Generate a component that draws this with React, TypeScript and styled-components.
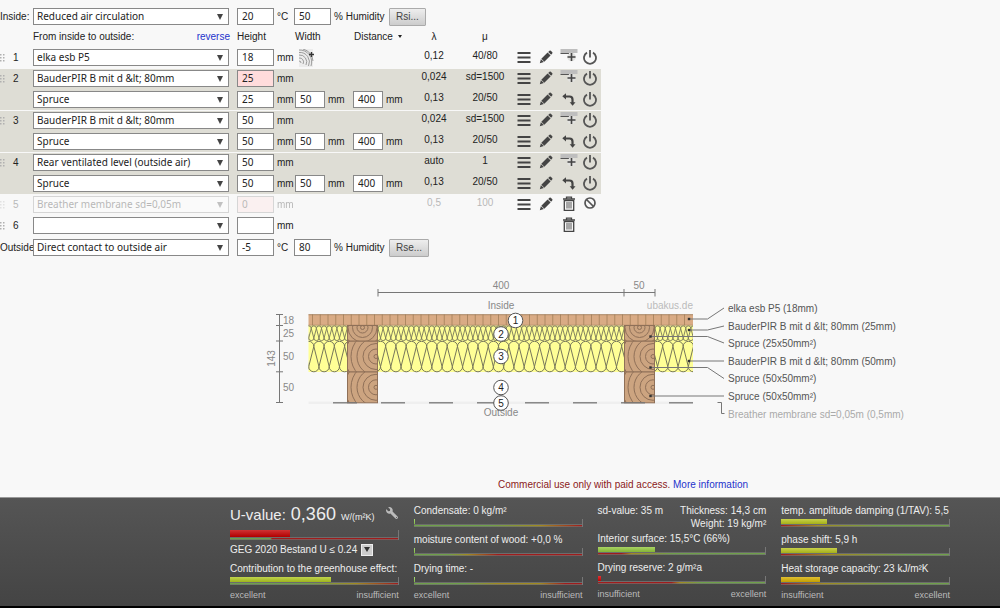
import React from "react";
import styled, { createGlobalStyle } from "styled-components";
import { FaWrench } from "react-icons/fa";

const Global = createGlobalStyle`
  *, *::before, *::after { box-sizing: border-box; }
  body {
    margin: 0;
    background: #f8f8f8;
    color: #222;
    font: 10px/16px "Liberation Sans", Arial, sans-serif;
  }
`;

const FIELD_FONT = `"Noto Sans", Verdana, sans-serif`;

const Page = styled.div`
  display: flex;
  flex-direction: column;
  min-height: 100vh;
  padding-top: 8px;
`;

/* ---------- form fields ---------- */

const SelectWrap = styled.div`
  position: relative;
  width: 196px;
  height: 17px;
  flex: none;
  &::after {
    content: "";
    position: absolute;
    right: 6px;
    top: 6px;
    border: 3px solid transparent;
    border-top: 6px solid #444;
    border-bottom: 0;
    pointer-events: none;
  }
`;

const Select = styled.select`
  appearance: none;
  display: block;
  width: 100%;
  height: 17px;
  margin: 0;
  padding: 0 16px 0 3px;
  border: 1px solid #888;
  border-radius: 0;
  background: #fff;
  color: #222;
  font: 10px/15px ${FIELD_FONT};
`;

const NumberBox = styled.input<{ $narrow?: boolean; $warn?: boolean }>`
  display: block;
  flex: none;
  width: ${(p) => (p.$narrow ? 30 : 37)}px;
  height: 17px;
  margin: 0;
  padding: 0 4px 1px;
  border: 1px solid #888;
  border-radius: 0;
  background: ${(p) => (p.$warn ? "#ffdcdc" : "#fff")};
  color: #222;
  font: 10px/14px ${FIELD_FONT};
`;

const Field = styled.div`
  display: flex;
  gap: 3px;
  line-height: 18px;
`;

function Dropdown({ label, value, id }: { label: string; value: string; id?: string }) {
  return (
    <SelectWrap>
      <Select id={id} aria-label={label} defaultValue={value}>
        <option>{value}</option>
      </Select>
    </SelectWrap>
  );
}

/* ---------- inside / outside climate ---------- */

const ClimateRow = styled.div`
  display: flex;
  height: 17px;
  line-height: 18px;
`;

const ClimateLabel = styled.label`
  flex: none;
  width: 33px;
  white-space: nowrap;
`;

const Unit = styled.span<{ $w: number }>`
  flex: none;
  width: ${(p) => p.$w}px;
  padding-left: 3px;
  white-space: nowrap;
`;

const Gap = styled.span`
  flex: none;
  width: 8px;
`;

const GreyButton = styled.button`
  height: 18px;
  padding: 0 6px;
  border: 1px solid #aaa;
  border-radius: 1px;
  background: linear-gradient(#eee, #ccc);
  color: #444;
  font: 10px/16px "Liberation Sans", Arial, sans-serif;
`;

type ClimateProps = { id: string; name: string; surface: string; temp: string; humidity: string; button: string };

function Climate({ id, name, surface, temp, humidity, button }: ClimateProps) {
  return (
    <ClimateRow>
      <ClimateLabel htmlFor={id}>{name}</ClimateLabel>
      <Dropdown id={id} label={name} value={surface} />
      <Gap />
      <NumberBox aria-label={`${name} temperature`} defaultValue={temp} />
      <Unit $w={20}>°C</Unit>
      <NumberBox aria-label={`${name} humidity`} defaultValue={humidity} />
      <Unit $w={58}>% Humidity</Unit>
      <GreyButton type="button">{button}</GreyButton>
    </ClimateRow>
  );
}

/* ---------- layer table ---------- */

const LayerTable = styled.table`
  width: 601px;
  margin-bottom: 2px;
  border-collapse: collapse;
  table-layout: fixed;
  td,
  th {
    padding: 0;
    font-weight: normal;
    text-align: left;
    vertical-align: top;
  }
`;

const HeadRow = styled.tr`
  height: 23px;
  th {
    vertical-align: middle;
    white-space: nowrap;
  }
`;

const HeadSplit = styled.div`
  display: flex;
  justify-content: space-between;
  width: 197px;
`;

const Link = styled.a`
  color: #2433cc;
  text-decoration: none;
`;

const CenterHead = styled.th`
  && {
    text-align: center;
  }
`;

const HeadButton = styled.button`
  display: flex;
  align-items: center;
  gap: 5px;
  padding: 0 0 0 1px;
  border: 0;
  background: none;
  color: inherit;
  font: inherit;
  &::after {
    content: "";
    border: 2px solid transparent;
    border-top: 3px solid #222;
    border-bottom: 0;
  }
`;

const Group = styled.tbody<{ $shaded?: boolean }>`
  background: ${(p) => (p.$shaded ? "#deddd5" : "transparent")};
  box-shadow: ${(p) => (p.$shaded ? "inset 0 -1px #f8f8f8" : "none")};
`;

const LayerRow = styled.tr<{ $off?: boolean }>`
  height: 21px;
  td {
    padding-top: 1px;
  }
  td:not(:last-child) > * {
    opacity: ${(p) => (p.$off ? 0.3 : 1)};
  }
`;

const NumberCell = styled.div`
  display: flex;
  align-items: center;
  gap: 8px;
  height: 18px;
`;

const Value = styled.div`
  line-height: 13px;
  text-align: center;
`;

const Actions = styled.div`
  display: grid;
  grid-template-columns: 22px 22px 23px 19px;
  padding-left: 6px;
`;

const IconButton = styled.button<{ $col?: number }>`
  display: flex;
  align-items: center;
  justify-content: center;
  height: 16px;
  padding: 0;
  border: 0;
  background: none;
  grid-column: ${(p) => p.$col ?? "auto"};
  svg {
    flex: none;
  }
`;

const WoodButton = styled(IconButton)`
  height: 18px;
  padding-left: 3px;
`;

const Grip = () => (
  <svg width="5" height="8" viewBox="0 0 5 8" fill="#b0b0b0">
    {[0, 3, 6].map((y) => (
      <React.Fragment key={y}>
        <rect x="0" y={y} width="1.5" height="1.5" />
        <rect x="3" y={y} width="1.5" height="1.5" />
      </React.Fragment>
    ))}
  </svg>
);

const MenuIcon = () => (
  <svg width="14" height="14" viewBox="0 0 14 14" stroke="#444" strokeWidth="2">
    <path d="M0.500 3H13.500M0.500 7.500H13.500M0.500 12H13.500" />
  </svg>
);

const PencilIcon = () => (
  <svg width="14" height="14" viewBox="0 0 14 14" fill="#444">
    <path d="M0.800 13.200L1.900 9.200L4.900 12.100Z" />
    <path d="M2.300 8.700L8.600 2.400L11.600 5.400L5.300 11.700Z" />
    <path d="M9.200 1.900L10.500 0.700Q11.200 0.300 11.800 0.800L13.300 2.300Q13.700 2.900 13.200 3.500L12.100 4.800Z" />
  </svg>
);

const InsertIcon = () => (
  <svg width="18" height="16" viewBox="0 0 18 16">
    <rect x="0.500" y="0" width="17" height="4" fill="#bebebe" />
    <path d="M0.500 4.500H9" stroke="#555" />
    <circle cx="11.500" cy="8" r="4.300" fill="#e2e2e0" />
    <path d="M7.500 8H15.500M11.500 4V12" stroke="#444" strokeWidth="1.600" />
  </svg>
);

const TurnIcon = () => (
  <svg width="14" height="14" viewBox="0 0 14 14">
    <path d="M3 4.500H7.500Q10.500 4.500 10.500 7.500V11" fill="none" stroke="#444" strokeWidth="2.200" />
    <path d="M0.300 4.200L4 1.200V7.400ZM7.700 10.300H13.500L10.600 13.800Z" fill="#444" />
  </svg>
);

const PowerIcon = () => (
  <svg width="14" height="16" viewBox="0 0 14 16" fill="none" stroke="#555" strokeWidth="1.800">
    <path d="M4 3.600A6 6 0 1 0 10 3.600M7 1V8.500" />
  </svg>
);

const TrashIcon = () => (
  <svg width="14" height="16" viewBox="0 0 14 16" fill="none" stroke="#444">
    <path d="M1 3H13M4.500 2.500V1.200H9.500V2.500" strokeWidth="1.300" />
    <path d="M2.300 4.500V14.300H11.700V4.500Z" strokeWidth="1.300" />
    <path d="M5 6V12.500M7 6V12.500M9 6V12.500" strokeWidth="0.900" />
  </svg>
);

const BlockedIcon = () => (
  <svg width="14" height="16" viewBox="0 0 14 16" fill="none" stroke="#555" strokeWidth="1.700">
    <circle cx="7" cy="7" r="5" />
    <path d="M3.500 3.500L10.500 10.500" />
  </svg>
);

const WoodAddIcon = () => (
  <svg width="18" height="18" viewBox="0 0 18 18" fill="none">
    <rect x="1" y="0" width="14" height="18" fill="#ececec" />
    <g stroke="#888" strokeWidth="0.800">
      <path d="M1 9A4 4 0 0 1 5 15M1 6A7 7 0 0 1 8 16M1 3.500A9.500 9.500 0 0 1 10.500 17M1 1A12 12 0 0 1 13 17M5 0A14 14 0 0 1 15 12M1 12A2 2 0 0 1 3 14" />
    </g>
    <path d="M11 5.500H16M13.500 3V8" stroke="#333" strokeWidth="1.400" />
  </svg>
);

type Row = {
  no?: number;
  material: string;
  height: string;
  warn?: boolean;
  width?: string;
  distance?: string;
  wood?: boolean;
  lambda?: string;
  mu?: string;
  kind: "layer" | "stud" | "off" | "empty";
};

const layers: { shaded?: boolean; rows: Row[] }[] = [
  { rows: [{ no: 1, material: "elka esb P5", height: "18", wood: true, lambda: "0,12", mu: "40/80", kind: "layer" }] },
  {
    shaded: true,
    rows: [
      { no: 2, material: "BauderPIR B mit d &lt; 80mm", height: "25", warn: true, lambda: "0,024", mu: "sd=1500", kind: "layer" },
      { material: "Spruce", height: "25", width: "50", distance: "400", lambda: "0,13", mu: "20/50", kind: "stud" },
    ],
  },
  {
    shaded: true,
    rows: [
      { no: 3, material: "BauderPIR B mit d &lt; 80mm", height: "50", lambda: "0,024", mu: "sd=1500", kind: "layer" },
      { material: "Spruce", height: "50", width: "50", distance: "400", lambda: "0,13", mu: "20/50", kind: "stud" },
    ],
  },
  {
    shaded: true,
    rows: [
      { no: 4, material: "Rear ventilated level (outside air)", height: "50", lambda: "auto", mu: "1", kind: "layer" },
      { material: "Spruce", height: "50", width: "50", distance: "400", lambda: "0,13", mu: "20/50", kind: "stud" },
    ],
  },
  { rows: [{ no: 5, material: "Breather membrane sd=0,05m", height: "0", warn: true, lambda: "0,5", mu: "100", kind: "off" }] },
  { rows: [{ no: 6, material: "", height: "", kind: "empty" }] },
];

function RowActions({ kind }: { kind: Row["kind"] }) {
  if (kind === "empty") {
    return (
      <Actions>
        <IconButton type="button" aria-label="Delete layer" $col={3}><TrashIcon /></IconButton>
      </Actions>
    );
  }
  return (
    <Actions>
      <IconButton type="button" aria-label="Choose material"><MenuIcon /></IconButton>
      <IconButton type="button" aria-label="Edit material"><PencilIcon /></IconButton>
      {kind === "layer" && <IconButton type="button" aria-label="Insert layer"><InsertIcon /></IconButton>}
      {kind === "stud" && <IconButton type="button" aria-label="Rotate"><TurnIcon /></IconButton>}
      {kind === "off" && <IconButton type="button" aria-label="Delete layer"><TrashIcon /></IconButton>}
      <IconButton type="button" aria-label="Toggle layer">
        {kind === "off" ? <BlockedIcon /> : <PowerIcon />}
      </IconButton>
    </Actions>
  );
}

function Layers() {
  return (
    <LayerTable>
      <colgroup>
        {[33, 204, 58, 58, 52, 58, 44, 94].map((w, i) => (
          <col key={i} width={w} />
        ))}
      </colgroup>
      <thead>
        <HeadRow>
          <th />
          <th>
            <HeadSplit>
              <span>From inside to outside:</span>
              <Link href="#reverse">reverse</Link>
            </HeadSplit>
          </th>
          <th>Height</th>
          <th>Width</th>
          <th><HeadButton type="button">Distance</HeadButton></th>
          <CenterHead>λ</CenterHead>
          <CenterHead>μ</CenterHead>
          <th />
        </HeadRow>
      </thead>
      {layers.map((group, g) => (
        <Group key={g} $shaded={group.shaded}>
          {group.rows.map((r, i) => (
            <LayerRow key={i} $off={r.kind === "off"}>
              <td>{r.no && <NumberCell><Grip />{r.no}</NumberCell>}</td>
              <td><Dropdown label="Material" value={r.material} /></td>
              <td>
                <Field>
                  <NumberBox aria-label="Height" defaultValue={r.height} $warn={r.warn} />
                  mm
                </Field>
              </td>
              <td>
                {r.wood && <WoodButton type="button" aria-label="Add wood studs"><WoodAddIcon /></WoodButton>}
                {r.width && <Field><NumberBox aria-label="Width" $narrow defaultValue={r.width} />mm</Field>}
              </td>
              <td>
                {r.distance && <Field><NumberBox aria-label="Distance" $narrow defaultValue={r.distance} />mm</Field>}
              </td>
              <td><Value>{r.lambda}</Value></td>
              <td><Value>{r.mu}</Value></td>
              <td><RowActions kind={r.kind} /></td>
            </LayerRow>
          ))}
        </Group>
      ))}
    </LayerTable>
  );
}

/* ---------- cross section ---------- */

const Figure = styled.figure`
  display: flex;
  justify-content: center;
  margin: 19px 0 0;
  svg {
    flex: none;
    font-family: "Liberation Sans", Arial, sans-serif;
    font-size: 10px;
  }
`;

function coil(from: number, to: number, top: number, bottom: number, pitch: number) {
  const r = pitch / 2;
  let d = `M${from - pitch} ${bottom - r}`;
  for (let x = from - pitch; x < to + pitch; x += pitch) {
    d += `A${r} ${r} 0 0 0 ${x + pitch} ${bottom - r}L${x + r} ${top + r}A${r} ${r} 0 0 1 ${x + pitch + r} ${top + r}L${x + pitch} ${bottom - r}`;
  }
  return d;
}

const boardLines = Array.from({ length: 49 }, (_, i) => 312.500 + i * 7.750);
const dashes = [333, 381, 429, 477, 525, 573, 621, 669];

const callouts = [
  { text: "elka esb P5 (18mm)", y: 308, dot: [689, 319], d: "M689 319H707.500L724 308" },
  { text: "BauderPIR B mit d &lt; 80mm (25mm)", y: 326, dot: [689, 330], d: "M689 330H707.500L724 326" },
  { text: "Spruce (25x50mm²)", y: 343.500, dot: [650.500, 336.500], d: "M650.500 336.500H707.500L724 343" },
  { text: "BauderPIR B mit d &lt; 80mm (50mm)", y: 361, dot: [689, 361], d: "M689 361H724" },
  { text: "Spruce (50x50mm²)", y: 378.500, dot: [650.500, 367.500], d: "M650.500 367.500H707.500L724 378.500" },
  { text: "Spruce (50x50mm²)", y: 396, dot: [650.500, 396], d: "M650.500 396H724" },
];

const badges = [
  [515.500, 320.500],
  [501, 334],
  [501, 356.500],
  [501, 387.500],
  [501, 403],
];

function Stud({ x, y, h, cx, cy, rings }: { x: number; y: number; h: number; cx: number; cy: number; rings: number[] }) {
  const id = `stud-${x}-${Math.round(y)}`;
  return (
    <g>
      <clipPath id={id}><rect x={x} y={y} width="31" height={h} /></clipPath>
      <rect x={x} y={y} width="31" height={h} fill="#cca480" />
      <g clipPath={`url(#${id})`} fill="none" stroke="#8f7058" strokeWidth="1">
        {rings.map((r) => <circle key={r} cx={x + cx} cy={y + cy} r={r} />)}
      </g>
      <rect x={x + 0.500} y={y} width="30" height={h} fill="none" stroke="#8f7058" />
    </g>
  );
}

function CrossSection() {
  return (
    <Figure>
      <svg width="840" height="150" viewBox="80 275 840 150" role="img" aria-label="Cross section of the component">
        <clipPath id="panel"><rect x="308.500" y="314" width="384.500" height="90" /></clipPath>
        <g clipPath="url(#panel)">
          <rect x="308" y="314.500" width="386" height="11" fill="#d9ab85" />
          {boardLines.map((x) => <path key={x} d={`M${x} 314.500V325.500`} stroke="#ad8862" />)}
          <path d="M308 314.700H694M308 325.300H694" stroke="#9c7a58" strokeWidth="0.800" />
          <rect x="308" y="325.700" width="386" height="46.300" fill="#ffff96" />
          <g fill="none" stroke="#77775a">
            <path d={coil(308.700, 694, 325.900, 340.600, 5.130)} strokeWidth="0.900" />
            <path d={coil(308.700, 694, 341.300, 371.800, 10.260)} />
          </g>
          <rect x="308" y="401.500" width="386" height="3" fill="#efefef" />
        </g>
        {[347, 624].map((x) => (
          <React.Fragment key={x}>
            <Stud x={x} y={325.500} h={15.700} cx={15.500} cy={2} rings={[2, 5.500, 10, 14.500, 19]} />
            <Stud x={x} y={341.200} h={30.800} cx={29} cy={15.300} rings={[2, 7.500, 13, 19, 25, 31]} />
            <Stud x={x} y={372} h={30.800} cx={29} cy={15.300} rings={[2, 7.500, 13, 19, 25, 31]} />
          </React.Fragment>
        ))}
        {dashes.map((x) => <path key={x} d={`M${x} 402.800H${x + 24}`} stroke="#777" strokeWidth="1.300" />)}

        <g stroke="#777" fill="none">
          <path d="M378 292.500H655M378 289V296.500M624 289V296.500M655 289V296.500" />
          <path d="M279.500 314.500V402.500M276 314.500H283M276 325.500H283M276 341H283M276 371.800H283M276 402.500H283" />
        </g>
        <g fill="#888" textAnchor="middle">
          <text x="501" y="289">400</text>
          <text x="639" y="289">50</text>
          <text x="501" y="308.500">Inside</text>
          <text x="501" y="416">Outside</text>
          <text x="288.500" y="324">18</text>
          <text x="288.500" y="337">25</text>
          <text x="288.500" y="360">50</text>
          <text x="288.500" y="391">50</text>
          <text transform="translate(275 358.500) rotate(-90)">143</text>
        </g>
        <text x="693" y="308.500" textAnchor="end" fill="#bbb">ubakus.de</text>

        {callouts.map((c) => (
          <g key={c.y}>
            <path d={c.d} fill="none" stroke="#777" />
            <rect x={c.dot[0] - 1.200} y={c.dot[1] - 1.200} width="2.400" height="2.400" fill="#333" />
            <text x="728" y={c.y + 3.500} fill="#555">{c.text}</text>
          </g>
        ))}
        <path d="M717.500 402.500H721.500V413.500H724.500" fill="none" stroke="#777" />
        <text x="728" y="417.500" fill="#aaa">Breather membrane sd=0,05m (0,5mm)</text>

        {badges.map(([x, y], i) => (
          <g key={i}>
            <circle cx={x} cy={y} r="7.300" fill="#fff" stroke="#555" />
            <text x={x} y={y + 3.500} textAnchor="middle" fill="#222">{i + 1}</text>
          </g>
        ))}
      </svg>
    </Figure>
  );
}

/* ---------- results ---------- */

const Notice = styled.p`
  margin: auto 0 0;
  padding: 8px 0 4px 246px;
  color: #8b1a1a;
  text-align: center;
`;

const Footer = styled.footer`
  display: grid;
  grid-template-columns: repeat(4, minmax(0, 1fr));
  column-gap: 15px;
  padding: 5px 5% 6px 23%;
  border-top: 1px solid #999;
  border-bottom: 2px solid #000;
  background: linear-gradient(#555, #444);
  color: #eee;
  white-space: nowrap;
`;

const Metric = styled.div`
  margin-bottom: 5px;
`;

const Bar = styled.div<{ $tall?: boolean }>`
  display: flex;
  flex-direction: column;
  height: ${(p) => (p.$tall ? 10 : 8)}px;
  border-right: 1px solid #777;
`;

const Fill = styled.div<{ $color: string }>`
  flex: 1;
  min-width: 1px;
  background: linear-gradient(rgba(255, 255, 255, 0.2), rgba(0, 0, 0, 0.1)), ${(p) => p.$color};
`;

const Scale = styled.div<{ $stops: string }>`
  flex: none;
  height: 3px;
  border-top: 1px solid #6c6c6c;
  background: linear-gradient(transparent 50%, rgba(112, 112, 112, 0.7) 50%),
    linear-gradient(to right, ${(p) => p.$stops});
`;

const Ends = styled.div`
  display: flex;
  justify-content: space-between;
  color: #bbb;
  font-size: 9px;
  line-height: 10px;
`;

const UValue = styled.div`
  display: flex;
  align-items: baseline;
  height: 27px;
  font-size: 15px;
  line-height: 23px;
  svg {
    margin: 4px 1px 0 auto;
    align-self: flex-start;
    transform: scaleX(-1);
  }
`;

const Big = styled.span`
  margin-left: 5px;
  font-size: 18px;
`;

const Small = styled.span`
  margin-left: 5px;
  font-size: 9px;
`;

const Standard = styled.div`
  display: flex;
  align-items: center;
  gap: 4px;
  height: 21px;
  padding-bottom: 2px;
`;

const TinyButton = styled.button`
  display: flex;
  align-items: center;
  justify-content: center;
  width: 12px;
  height: 12px;
  padding: 0;
  border: 1px solid #eee;
  background: #ccc;
  &::after {
    content: "";
    border: 3px solid transparent;
    border-top: 5px solid #333;
    border-bottom: 0;
  }
`;

const Facts = styled.div`
  display: flex;
  justify-content: space-between;
  height: 28px;
  padding-top: 1px;
  line-height: 13px;
`;

const RightFacts = styled.div`
  text-align: right;
`;

type GaugeProps = { label?: string; fill: number; color: string; stops: string; tall?: boolean };

function Gauge({ label, fill, color, stops, tall }: GaugeProps) {
  return (
    <>
      {label && <div>{label}</div>}
      <Bar $tall={tall}>
        <Fill $color={color} style={{ width: `${fill}%` }} />
        <Scale $stops={stops} />
      </Bar>
    </>
  );
}

const GREEN = "#6fa04a";
const OLIVE = "#a08a20";
const RED = "#a01c1c";

function Results() {
  return (
    <Footer>
      <div>
        <UValue>
          U-value: <Big>0,360</Big> <Small>W/(m²K)</Small> <FaWrench size={12} color="#bbb" />
        </UValue>
        <Gauge tall fill={36} color="#c40000" stops={`${GREEN} 24%, ${RED} 25%`} />
        <Standard>
          GEG 2020 Bestand U ≤ 0.24 <TinyButton type="button" aria-label="Choose standard" />
        </Standard>
        <Metric>
          <Gauge label="Contribution to the greenhouse effect:" fill={60} color="#b0c820" stops={`${GREEN}, ${GREEN} 45%, ${OLIVE} 75%, ${RED}`} />
        </Metric>
        <Ends><span>excellent</span><span>insufficient</span></Ends>
      </div>
      <div>
        <Metric><Gauge label="Condensate: 0 kg/m²" fill={1} color="#90d050" stops={`${GREEN}, ${GREEN} 45%, ${OLIVE} 75%, ${RED}`} /></Metric>
        <Metric><Gauge label="moisture content of wood: +0,0 %" fill={1} color="#90d050" stops={`${GREEN}, ${GREEN} 20%, ${OLIVE} 32%, ${RED} 50%`} /></Metric>
        <Metric><Gauge label="Drying time: -" fill={1} color="#90d050" stops={`${GREEN}, ${GREEN} 30%, ${OLIVE} 50%, ${OLIVE} 75%, ${RED} 90%`} /></Metric>
        <Ends><span>excellent</span><span>insufficient</span></Ends>
      </div>
      <div>
        <Facts>
          <span>sd-value: 35 m</span>
          <RightFacts>
            <div>Thickness: 14,3 cm</div>
            <div>Weight: 19 kg/m²</div>
          </RightFacts>
        </Facts>
        <Metric><Gauge label="Interior surface: 15,5°C (66%)" fill={34} color="#92c83c" stops={`${RED}, ${RED} 14%, ${OLIVE} 20%, ${GREEN} 45%`} /></Metric>
        <Metric><Gauge label="Drying reserve: 2 g/m²a" fill={2} color="#d80000" stops={`${RED}, ${RED} 44%, ${OLIVE} 49%, ${GREEN} 62%`} /></Metric>
        <Ends><span>insufficient</span><span>excellent</span></Ends>
      </div>
      <div>
        <Metric><Gauge label="temp. amplitude damping (1/TAV): 5,5" fill={27} color="#b8c41c" stops={`${RED}, ${OLIVE} 22%, ${GREEN} 60%`} /></Metric>
        <Metric><Gauge label="phase shift: 5,9 h" fill={33} color="#b8c41c" stops={`${RED}, ${OLIVE} 30%, ${GREEN} 75%`} /></Metric>
        <Metric><Gauge label="Heat storage capacity: 23 kJ/m²K" fill={23} color="#d8b000" stops={`${RED}, ${OLIVE} 25%, ${GREEN} 70%`} /></Metric>
        <Ends><span>insufficient</span><span>excellent</span></Ends>
      </div>
    </Footer>
  );
}

export default function App() {
  return (
    <Page>
      <Global />
      <Climate id="inside" name="Inside:" surface="Reduced air circulation" temp="20" humidity="50" button="Rsi..." />
      <Layers />
      <Climate id="outside" name="Outside" surface="Direct contact to outside air" temp="-5" humidity="80" button="Rse..." />
      <CrossSection />
      <Notice>
        Commercial use only with paid access. <Link href="#info">More information</Link>
      </Notice>
      <Results />
    </Page>
  );
}
